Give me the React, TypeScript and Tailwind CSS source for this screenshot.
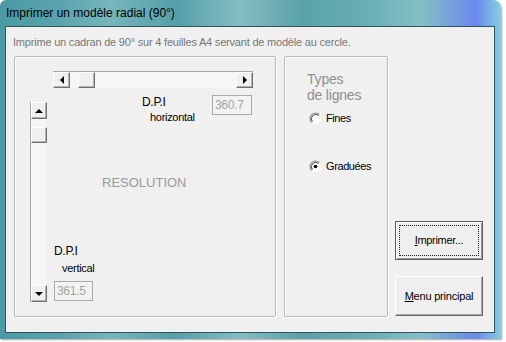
import React from 'react';

const sans = "[font-family:'Liberation_Sans',Arial,sans-serif]";

function Arrow({ dir }: { dir: 'left' | 'right' | 'up' | 'down' }) {
  const pts: Record<string, string> = {
    left: '5,1 5,9 1,5',
    right: '1,1 1,9 5,5',
    up: '1,5 9,5 5,1',
    down: '1,1 9,1 5,5'
  };
  const horiz = dir === 'left' || dir === 'right';
  return (
    <svg width={horiz ? 6 : 10} height={horiz ? 10 : 6} viewBox={horiz ? '0 0 6 10' : '0 0 10 6'}>
      <polygon points={pts[dir]} fill="#000" />
    </svg>);

}

function ScrollButton({ children, className = '' }: { children?: React.ReactNode; className?: string }) {
  return (
    <div
      className={`flex items-center justify-center bg-[#f0f0f0] border border-t-white border-l-white border-b-[#6f6f6f] border-r-[#6f6f6f] shadow-[inset_-1px_-1px_0_#b4b4b4] ${className}`}>
      {children}
    </div>);

}

function Radio({ label, checked }: { label: string; checked?: boolean }) {
  return (
    <div className="flex items-center h-[14px]">
      <svg width="13" height="13" viewBox="0 0 13 13" className="ml-[24px]">
        <circle cx="6.5" cy="6.5" r="5.5" fill="#fff" />
        <path d="M2.6 10.4 A5.5 5.5 0 0 1 10.4 2.6" stroke="#8a8a8a" strokeWidth="1.2" fill="none" />
        <path d="M3.4 9.6 A4.4 4.4 0 0 1 9.6 3.4" stroke="#404040" strokeWidth="1" fill="none" />
        {checked && <circle cx="6.5" cy="6.5" r="1.8" fill="#000" />}
      </svg>
      <span className="ml-[4px] text-[11px] tracking-[-0.4px] text-black leading-[14px]">{label}</span>
    </div>);

}

function Field({ value, className = '' }: { value: string; className?: string }) {
  return (
    <div
      className={`h-[20px] border border-[#a9a9a9] bg-[#f3f3f3] text-[12px] leading-[18px] pl-[2px] text-[#a3a3a3] tracking-[-0.3px] ${className}`}>
      {value}
    </div>);

}

export default function App() {
  return (
    <div className={`w-[506px] h-[342px] bg-white overflow-hidden ${sans}`}>
      <div className="w-[501px] h-[339px] rounded-tl-[6px] rounded-tr-[8px] bg-[linear-gradient(90deg,#4a9aa3_0%,#5aa4ad_12%,#78b5bc_22%,#559fa8_35%,#86bdc2_48%,#5aa2a9_60%,#66adb4_72%,#84bfc5_84%,#6a88ee_95%,#86cfe0_100%)] flex flex-col shadow-[1px_1px_2px_rgba(0,0,0,0.35)]">
        <div className="h-[26px] pl-[6px] flex items-center text-[12px] text-black">
          Imprimer un modèle radial (90°)
        </div>

        <div className="ml-[5px] w-[490px] h-[307px] border border-[#30555b] bg-[#f0f0f0]">
          <div className="pt-[9px] pl-[7px] text-[11px] leading-[13px] text-[#777777] tracking-[-0.2px]">
            Imprime un cadran de 90° sur 4 feuilles A4 servant de modèle au cercle.
          </div>

          <div className="flex mt-[7px] ml-[8px]">
            {/* left group */}
            <div className="w-[262px] h-[261px] border border-[#b9b9b9] rounded-[2px] shadow-[1px_1px_0_#ffffff,inset_1px_1px_0_#ffffff] flex flex-col">
              <div className="ml-[38px] mt-[14px] w-[200px] h-[17px] flex bg-[#f6f6f6] border-t border-[#a8a8a8]">
                <ScrollButton className="w-[17px] h-full">
                  <Arrow dir="left" />
                </ScrollButton>
                <ScrollButton className="ml-[8px] w-[17px] h-full" />
                <div className="flex-1" />
                <ScrollButton className="w-[17px] h-full">
                  <Arrow dir="right" />
                </ScrollButton>
              </div>

              <div className="flex mt-[7px]">
                <div className="ml-[15px] mt-[7px] w-[17px] h-[200px] flex flex-col bg-[#f6f6f6] border-l border-[#a8a8a8]">
                  <ScrollButton className="h-[17px] w-full">
                    <Arrow dir="up" />
                  </ScrollButton>
                  <ScrollButton className="mt-[8px] h-[16px] w-full" />
                  <div className="flex-1" />
                  <ScrollButton className="h-[17px] w-full">
                    <Arrow dir="down" />
                  </ScrollButton>
                </div>

                <div className="ml-[7px] w-[198px] flex flex-col">
                  <div className="flex justify-between">
                    <div className="pl-[88px] text-black">
                      <div className="text-[12px] leading-[14px] tracking-[-0.3px]">D.P.I</div>
                      <div className="ml-[8px] mt-[1px] text-[11px] leading-[14px] tracking-[-0.3px]">horizontal</div>
                    </div>
                    <Field value="360.7" className="w-[40px]" />
                  </div>
                  <div className="ml-[48px] mt-[51px] text-[13px] leading-[15px] text-[#9a9a9a]">RESOLUTION</div>
                  <div className="mt-[54px] text-[12px] leading-[14px] tracking-[-0.3px] text-black">D.P.I</div>
                  <div className="ml-[8px] mt-[3px] text-[11px] leading-[14px] tracking-[-0.3px] text-black">vertical</div>
                  <Field value="361.5" className="mt-[6px] w-[39px]" />
                </div>
              </div>
            </div>

            {/* right group */}
            <div className="ml-[8px] w-[104px] h-[261px] border border-[#b9b9b9] rounded-[2px] shadow-[1px_1px_0_#ffffff,inset_1px_1px_0_#ffffff] flex flex-col">
              <div className="pt-[14px] pl-[22px] text-[14px] leading-[16px] text-[#8f8f8f] tracking-[-0.2px]">
                <div>Types</div>
                <div>de lignes</div>
              </div>
              <div className="mt-[8px]">
                <Radio label="Fines" />
              </div>
              <div className="mt-[34px]">
                <Radio label="Graduées" checked />
              </div>
            </div>

            {/* buttons */}
            <div className="ml-[7px] flex flex-col">
              <div className="mt-[165px] w-[88px] h-[39px] border border-[#5e5e5e] bg-[#efefef] shadow-[inset_1px_1px_0_#ffffff,inset_-1px_-1px_0_#9a9a9a] flex items-center justify-center">
                <div className="w-[80px] h-[31px] border border-dotted border-[#222] flex items-center justify-center text-[11px] tracking-[-0.3px] text-black">
                  <span className="underline underline-offset-1">I</span>mprimer...
                </div>
              </div>
              <div className="mt-[16px] w-[88px] h-[40px] border border-t-white border-l-white border-b-[#6a6a6a] border-r-[#6a6a6a] bg-[#efefef] shadow-[inset_-1px_-1px_0_#a5a5a5] flex items-center justify-center text-[11px] tracking-[-0.2px] text-black">
                <span className="underline underline-offset-1">M</span>enu principal
              </div>
            </div>
          </div>
        </div>
      </div>
    </div>);

}
